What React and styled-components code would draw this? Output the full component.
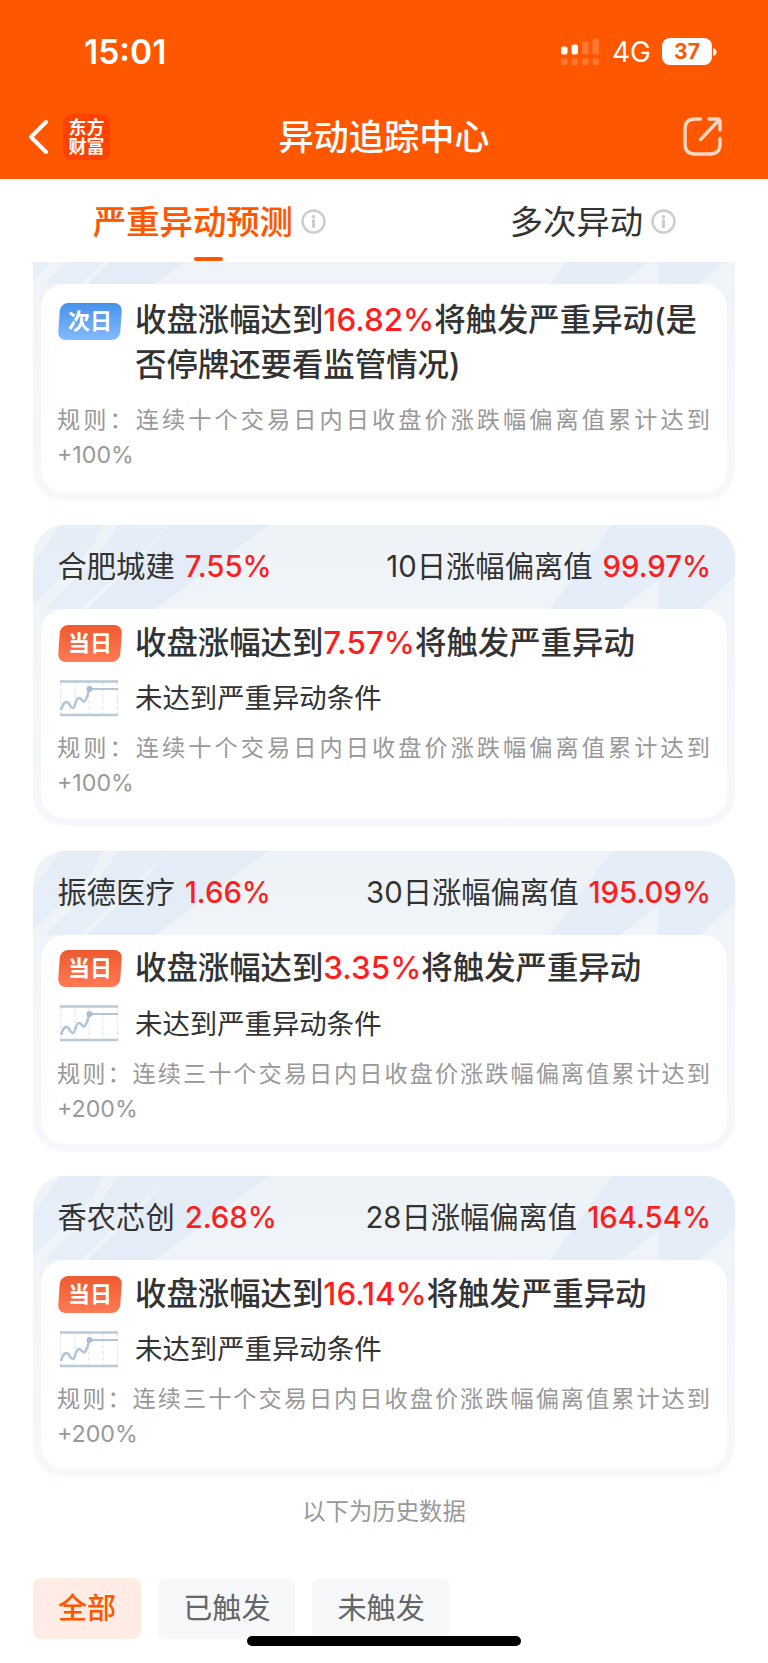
import React from 'react';
import styled, { createGlobalStyle } from 'styled-components';

const GlobalStyle = createGlobalStyle`
  * {
    box-sizing: border-box;
  }
  body {
    margin: 0;
    background: #fff;
    color: #333;
    font-family: Inter, 'Noto Sans CJK SC', sans-serif;
  }
`;

const Page = styled.div`
  width: 768px;
  height: 1663px;
  overflow: hidden;
  position: relative;
`;

const Header = styled.header`
  height: 179px;
  background: #ff5600;
  color: #fff;
`;

const StatusBar = styled.div`
  height: 95px;
  padding: 8px 51px 0 84px;
  display: flex;
  align-items: center;
  justify-content: space-between;
`;

const Clock = styled.span`
  font-size: 33.6px;
  font-weight: 600;
`;

const StatusRight = styled.div`
  display: flex;
  align-items: center;
`;

const Network = styled.span`
  font-size: 28px;
  line-height: 28px;
  margin: 1px 11px 0 12px;
`;

const Battery = styled.div`
  width: 50px;
  height: 27px;
  border-radius: 8px;
  background: #fff;
  color: #ff5600;
  font-size: 21px;
  font-weight: 700;
  line-height: 28px;
  text-align: center;
`;

const NavBar = styled.div`
  height: 84px;
  padding: 0 46px 1px;
  display: grid;
  grid-template-columns: 1fr auto 1fr;
  align-items: center;
`;

const NavLeft = styled.div`
  display: flex;
  align-items: center;
  gap: 14px;
  margin-left: -18px;
`;

const AppLogo = styled.div`
  width: 47px;
  height: 46px;
  border-radius: 9px;
  background: #ff4200;
  font-size: 18px;
  font-weight: 700;
  line-height: 19px;
  padding: 4px 0;
  text-align: center;
`;

const NavTitle = styled.h1`
  margin: 0;
  font-size: 35.2px;
  font-weight: 500;
  line-height: 50px;
`;

const NavRight = styled.div`
  display: flex;
  justify-content: flex-end;
`;

const Tabs = styled.nav`
  height: 83px;
  padding: 0 92px 0 93px;
  display: flex;
  justify-content: space-between;
`;

const Tab = styled.div`
  position: relative;
  height: 83px;
  padding-top: 2px;
  display: flex;
  align-items: center;
  gap: 8px;
  font-size: 33.3px;
  font-weight: ${(props) => (props.$active ? 500 : 400)};
  color: ${(props) => (props.$active ? '#ff5600' : '#333')};
  -webkit-text-stroke: ${(props) => (props.$active ? '0.2px' : '0')};
`;

const TabText = styled.span`
  margin-top: -5px;
`;

const TabLine = styled.span`
  position: absolute;
  left: 101px;
  bottom: 1px;
  width: 29px;
  height: 4px;
  border-radius: 2px;
  background: #ff5600;
`;

const List = styled.main`
  padding: 0 33px;
  height: 1215px;
  overflow: hidden;
  display: flex;
  flex-direction: column;
  justify-content: flex-end;
  gap: 24.5px;
`;

const Card = styled.section`
  position: relative;
  flex: none;
  height: 301px;
  padding: 0 8px 8px;
  border-radius: 32px;
  overflow: hidden;
  background: linear-gradient(#eef3f8, #f6f8fb);
  display: flex;
  flex-direction: column;
`;

const CardPattern = styled.svg`
  position: absolute;
  left: 0;
  top: 0;
`;

const CardHead = styled.div`
  position: relative;
  height: 84px;
  padding: 0 17px 0 16.5px;
  display: flex;
  align-items: center;
  justify-content: space-between;
  font-size: 29.3px;
  line-height: 42px;
`;

const Red = styled.span`
  color: #ff1e1e;
  font-weight: 500;
`;

const HeadText = styled.div`
  display: flex;
  align-items: baseline;
  gap: 10px;
  margin-right: -1px;
`;

const CardBody = styled.div`
  position: relative;
  flex: 1;
  padding: ${(props) => (props.$next ? '14px' : '11.5px')} 17px 0 16px;
  border-radius: 24px;
  background: #fff;
`;

const Row = styled.div`
  display: flex;
  align-items: flex-start;
`;

const Badge = styled.div`
  flex: none;
  width: 62px;
  height: 37px;
  margin: ${(props) => (props.$next ? '5px' : '4px')} 14px 0 2px;
  border-radius: 8px;
  transform: skewX(-4deg);
  background: ${(props) =>
    props.$next ? 'linear-gradient(#4692ea, #85b9ff)' : 'linear-gradient(#ee5a30, #ff7a55)'};
`;

const BadgeText = styled.span`
  display: block;
  transform: skewX(4deg);
  color: #fff;
  font-size: 22px;
  font-weight: 700;
  line-height: 36px;
  text-align: center;
`;

const Message = styled.div`
  font-size: 31.4px;
  font-weight: 500;
  line-height: 45.5px;
  white-space: pre;
`;

const StatusRow = styled.div`
  height: 64px;
  padding-left: 2.5px;
  display: flex;
  align-items: center;
  gap: 17.5px;
  font-size: 27.4px;
`;

const StatusText = styled.span`
  margin-top: -4px;
`;

const Rule = styled.p`
  margin: ${(props) => (props.$next ? '14px' : '1px')} 0 0;
  color: #999;
  font-size: 23.2px;
  line-height: 35px;
  text-align: justify;
`;

const HistoryNote = styled.div`
  height: 101px;
  padding-top: 17px;
  color: #999;
  font-size: 23.4px;
  line-height: 35px;
  text-align: center;
`;

const Filters = styled.div`
  display: flex;
  gap: 17px;
  padding: 0 33px;
`;

const FilterButton = styled.button`
  height: 61px;
  padding: 0 25px 5px;
  border: none;
  border-radius: 8px;
  background: ${(props) => (props.$active ? '#ffece4' : '#f7f8fa')};
  color: ${(props) => (props.$active ? '#ff5600' : '#666')};
  font-family: inherit;
  font-size: 29.1px;
  font-weight: ${(props) => (props.$active ? 500 : 400)};
`;

const HomeIndicator = styled.div`
  position: absolute;
  left: 247px;
  bottom: 17px;
  width: 274px;
  height: 10px;
  border-radius: 5px;
  background: #000;
`;

const cards = [
  {
    type: 'next',
    value: '16.82%',
    after: '将触发严重异动(是\n否停牌还要看监管情况)',
    rule: '规则：连续十个交易日内日收盘价涨跌幅偏离值累计达到+100%',
  },
  {
    type: 'today',
    name: '合肥城建',
    change: '7.55%',
    label: '10日涨幅偏离值',
    total: '99.97%',
    value: '7.57%',
    after: '将触发严重异动',
    rule: '规则：连续十个交易日内日收盘价涨跌幅偏离值累计达到+100%',
  },
  {
    type: 'today',
    name: '振德医疗',
    change: '1.66%',
    label: '30日涨幅偏离值',
    total: '195.09%',
    value: '3.35%',
    after: '将触发严重异动',
    rule: '规则：连续三十个交易日内日收盘价涨跌幅偏离值累计达到+200%',
  },
  {
    type: 'today',
    name: '香农芯创',
    change: '2.68%',
    label: '28日涨幅偏离值',
    total: '164.54%',
    value: '16.14%',
    after: '将触发严重异动',
    rule: '规则：连续三十个交易日内日收盘价涨跌幅偏离值累计达到+200%',
  },
];

const filters = ['全部', '已触发', '未触发'];

function SignalIcon() {
  return (
    <svg width="39" height="28" viewBox="0 0 39 28" fill="#fff">
      <rect x="0" y="8.5" width="6.5" height="8" rx="2" />
      <rect x="10.5" y="6.5" width="6.5" height="10" rx="2" />
      <g opacity="0.2">
        <rect x="21" y="3.5" width="6.5" height="13" rx="2" />
        <rect x="31.5" y="0.5" width="6.5" height="16" rx="2" />
        <rect x="0" y="20.5" width="6.5" height="6.5" rx="2" />
        <rect x="10.5" y="20.5" width="6.5" height="6.5" rx="2" />
        <rect x="21" y="20.5" width="6.5" height="6.5" rx="2" />
        <rect x="31.5" y="20.5" width="6.5" height="6.5" rx="2" />
      </g>
    </svg>
  );
}

function BackIcon() {
  return (
    <svg width="21" height="36" viewBox="0 0 21 36" fill="none" stroke="#fff" strokeWidth="4">
      <path d="M18 3L3 18L18 33" strokeLinecap="round" strokeLinejoin="round" />
    </svg>
  );
}

function ShareIcon() {
  return (
    <svg width="39" height="39" viewBox="0 0 39 39" fill="none" stroke="#ffd8c4" strokeWidth="3.4" strokeLinecap="round">
      <path d="M17.5 2H12Q2 2 2 12V27Q2 37 12 37H27Q37 37 37 27V21.5" />
      <path d="M26 2H34Q37 2 37 5V13M36 3L17.5 22.5" strokeLinejoin="round" />
    </svg>
  );
}

function InfoIcon() {
  return (
    <svg width="25" height="25" viewBox="0 0 25 25" fill="none" stroke="#ccc">
      <circle cx="12.5" cy="12.5" r="11" strokeWidth="2.4" />
      <path d="M12.5 11.5V17.5" strokeWidth="3" strokeLinecap="round" />
      <circle cx="12.5" cy="7.8" r="1.8" fill="#ccc" stroke="none" />
    </svg>
  );
}

function TrendIcon() {
  return (
    <svg width="58" height="37" viewBox="0 0 58 37" fill="none">
      <path d="M0.7 2V35M15 2V35M29 2V35M43 2V35M57.3 2V35" stroke="#dfe6ef" strokeDasharray="4 2" />
      <path d="M0 1.5H58M0 35H58" stroke="#b9c9da" strokeWidth="2.4" />
      <path
        d="M1 30C3 24 4 22 6.5 22C10 22 10 28 12.5 28C16 28 15 18 19 18C22 18 22 22 24 21.5C27 20 28 13 29.5 9"
        stroke="#b3c5d8"
        strokeWidth="2.5"
      />
      <path d="M29 9H58" stroke="#b3c5d8" strokeWidth="2.2" />
      <circle cx="29.5" cy="9" r="3" fill="#a8bdd3" />
    </svg>
  );
}

// Diagonal light beams behind the card head
function Pattern() {
  return (
    <CardPattern width="702" height="110" viewBox="0 0 702 110" fill="#dfeaf7">
      <path d="M27 0H69L60 21L0 80V39Z" opacity="0.6" />
      <path d="M85 0H137L47 84H12L62 34Z" opacity="0.6" />
      <path d="M137 0H235L122 84H54L108 32Z" opacity="0.75" />
      <path d="M579 0H702V51L655 95H625V55L587 84H517Z" opacity="0.65" />
    </CardPattern>
  );
}

function StockCard({ card }) {
  const next = card.type === 'next';
  return (
    <Card>
      <Pattern />
      <CardHead>
        {card.name && (
          <>
            <HeadText>
              <span>{card.name}</span>
              <Red>{card.change}</Red>
            </HeadText>
            <HeadText>
              <span>{card.label}</span>
              <Red>{card.total}</Red>
            </HeadText>
          </>
        )}
      </CardHead>
      <CardBody $next={next}>
        <Row>
          <Badge $next={next}>
            <BadgeText>{next ? '次日' : '当日'}</BadgeText>
          </Badge>
          <Message>
            收盘涨幅达到<Red>{card.value}</Red>
            {card.after}
          </Message>
        </Row>
        {!next && (
          <StatusRow>
            <TrendIcon />
            <StatusText>未达到严重异动条件</StatusText>
          </StatusRow>
        )}
        <Rule $next={next}>{card.rule}</Rule>
      </CardBody>
    </Card>
  );
}

function App() {
  return (
    <Page>
      <GlobalStyle />
      <Header>
        <StatusBar>
          <Clock>15:01</Clock>
          <StatusRight>
            <SignalIcon />
            <Network>4G</Network>
            <Battery>37</Battery>
            <svg width="5" height="10" viewBox="0 0 5 10" fill="#fff">
              <path d="M1 1Q4.5 2 4.5 5Q4.5 8 1 9Z" />
            </svg>
          </StatusRight>
        </StatusBar>
        <NavBar>
          <NavLeft>
            <BackIcon />
            <AppLogo>
              东方
              <br />
              财富
            </AppLogo>
          </NavLeft>
          <NavTitle>异动追踪中心</NavTitle>
          <NavRight>
            <ShareIcon />
          </NavRight>
        </NavBar>
      </Header>

      <Tabs>
        <Tab $active>
          <TabText>严重异动预测</TabText>
          <InfoIcon />
          <TabLine />
        </Tab>
        <Tab>
          <TabText>多次异动</TabText>
          <InfoIcon />
        </Tab>
      </Tabs>

      <List>
        {cards.map((card, index) => (
          <StockCard key={index} card={card} />
        ))}
      </List>

      <HistoryNote>以下为历史数据</HistoryNote>
      <Filters>
        {filters.map((filter, index) => (
          <FilterButton key={filter} $active={index === 0}>
            {filter}
          </FilterButton>
        ))}
      </Filters>
      <HomeIndicator />
    </Page>
  );
}

export default App;
